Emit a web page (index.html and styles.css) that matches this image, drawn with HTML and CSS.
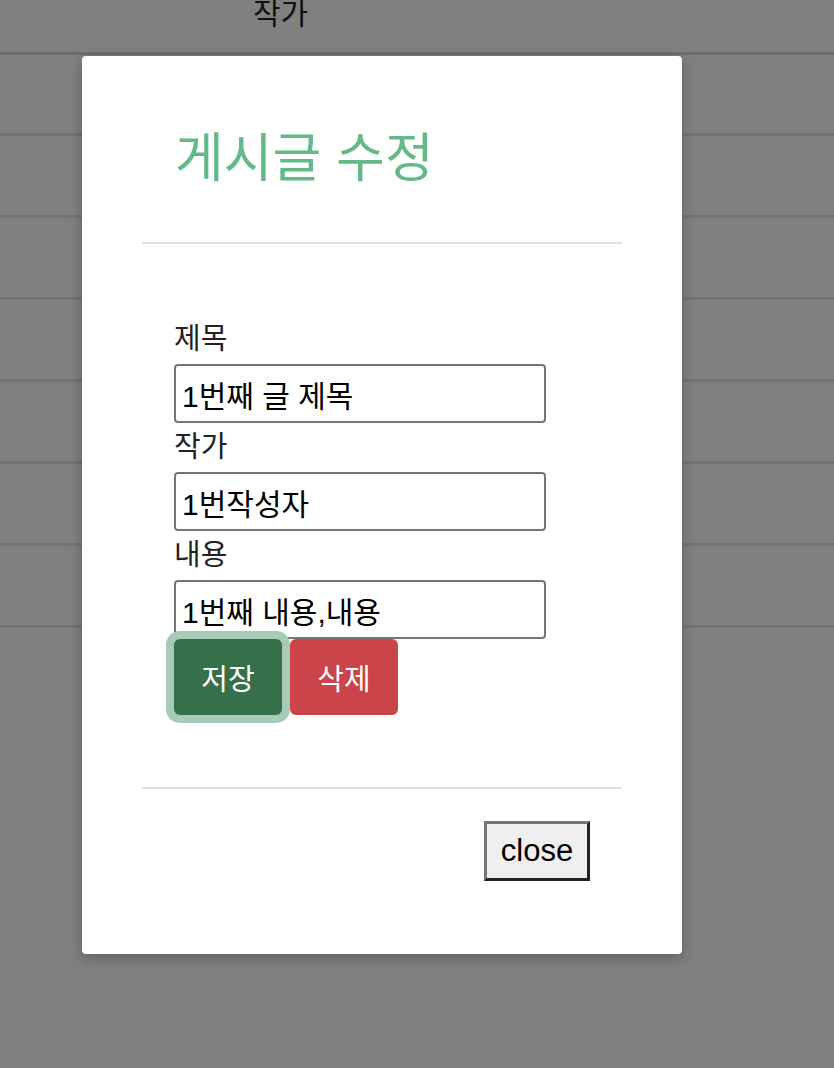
FILE: index.html
```html
<!DOCTYPE html>
<html lang="ko">
<head>
<meta charset="utf-8">
<title>게시글 수정</title>
<link rel="stylesheet" href="styles.css">
</head>
<body>
<div class="table">
  <div class="thead"><span class="th">작가</span></div>
  <div class="row"></div>
  <div class="row"></div>
  <div class="row"></div>
  <div class="row"></div>
  <div class="row"></div>
  <div class="row"></div>
  <div class="row"></div>
</div>
<div class="modal">
  <div class="modal-header">
    <h2 class="modal-title">게시글 수정</h2>
  </div>
  <div class="modal-body">
    <label class="field-label">제목</label>
    <input class="field-input" type="text" value="1번째 글 제목">
    <label class="field-label">작가</label>
    <input class="field-input" type="text" value="1번작성자">
    <label class="field-label">내용</label>
    <input class="field-input" type="text" value="1번째 내용,내용">
    <div class="actions">
      <button class="btn btn-save">저장</button>
      <button class="btn btn-delete">삭제</button>
    </div>
  </div>
  <div class="modal-footer">
    <button class="btn-close">close</button>
  </div>
</div>
</body>
</html>
```

FILE: styles.css
```css
html, body {
  margin: 0;
  padding: 0;
}
body {
  background: #808080;
  font-family: "Liberation Sans", "Noto Sans CJK KR", sans-serif;
  color: #111;
  height: 1068px;
  overflow: hidden;
  position: relative;
}
.table {
  display: flex;
  flex-direction: column;
}
.thead {
  height: 52px;
  border-bottom: 3px solid #6c6c6c;
  padding-left: 253px;
  overflow: hidden;
}
.th {
  display: block;
  font-size: 30px;
  line-height: 30px;
  margin-top: -1px;
  color: #111;
}
.row {
  height: 79px;
  border-bottom: 3px solid #747474;
}
.row:nth-child(2) { height: 78px; }
.modal {
  position: absolute;
  left: 82px;
  top: 56px;
  width: 600px;
  box-sizing: border-box;
  padding: 0 60px 72px;
  background: #fff;
  border-radius: 4px;
  box-shadow: 0 4px 14px rgba(0, 0, 0, 0.25);
}
.modal-header {
  height: 188px;
  box-sizing: border-box;
  padding: 66px 33px 0;
  border-bottom: 2px solid #dee2e6;
}
.modal-title {
  margin: 0;
  font-family: "Noto Sans CJK KR", sans-serif;
  font-weight: 400;
  font-size: 53px;
  line-height: 64px;
  color: #63b987;
}
.modal-body {
  padding: 71px 32px 72px;
  border-bottom: 2px solid #dee2e6;
  display: flex;
  flex-direction: column;
  align-items: flex-start;
}
.field-label {
  display: block;
  font-size: 29px;
  line-height: 49px;
  color: #222;
}
.field-input {
  width: 372px;
  height: 59px;
  box-sizing: border-box;
  margin: 0;
  padding: 0 6px;
  border: 2px solid #767676;
  border-radius: 4px;
  font-family: "Liberation Sans", "Noto Sans CJK KR", sans-serif;
  font-size: 30px;
  color: #000;
  background: #fff;
}
.actions {
  display: flex;
  gap: 8px;
}
.btn {
  width: 108px;
  height: 76px;
  border: none;
  border-radius: 6px;
  font-family: "Liberation Sans", "Noto Sans CJK KR", sans-serif;
  font-size: 29px;
  color: #fff;
  padding: 0;
}
.btn-save {
  background: #35704b;
  box-shadow: 0 0 0 8px #a8cbb7;
}
.btn-delete {
  background: #cb444a;
}
.modal-footer {
  padding: 32px 32px 1px 0;
  display: flex;
  justify-content: flex-end;
}
.btn-close {
  width: 106px;
  height: 60px;
  box-sizing: border-box;
  border: 3px solid;
  border-color: #767676 #222 #222 #767676;
  background: #efefef;
  font-family: "Liberation Sans", sans-serif;
  font-size: 31px;
  color: #000;
  padding: 0;
}
```
